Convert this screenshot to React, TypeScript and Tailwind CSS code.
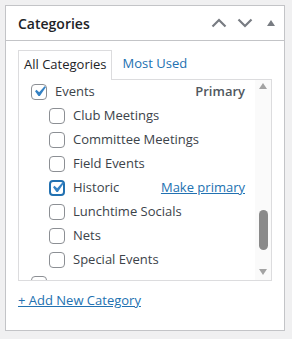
import React from 'react';

const font = { fontFamily: '"Open Sans", "Noto Sans", sans-serif' };

function Check({ checked = false, focus = false }: { checked?: boolean; focus?: boolean }) {
    return (
        <span
            className={
                'flex h-[16px] w-[16px] shrink-0 items-center justify-center rounded-[4px] bg-white ' +
                (focus ? 'border-2 border-[#2271b1]' : 'border border-[#8c8f94]')
            }
        >
            {checked && (
                <svg width="21" height="21" viewBox="0 0 20 20" className="shrink-0">
                    <path d="M14.83 4.89l1.34.94-5.81 8.38H9.02L5.78 9.67l1.34-1.25 2.57 2.4z" fill="#3582c4" />
                </svg>
            )}
        </span>
    );
}

const children = [
    { label: 'Club Meetings' },
    { label: 'Committee Meetings' },
    { label: 'Field Events' },
    { label: 'Historic', checked: true, focus: true, link: true },
    { label: 'Lunchtime Socials' },
    { label: 'Nets' },
    { label: 'Special Events' },
];

export default function App() {
    return (
        <div className="h-[339px] w-[292px] bg-[#f0f0f1] pt-[5px] pl-[5px]" style={font}>
            <div className="h-[326px] w-[280px] border border-[#c3c4c7] bg-white">
                {/* header */}
                <div className="flex h-[35px] items-center border-b border-[#c3c4c7] pl-[12px]">
                    <h2 className="flex-1 text-[14px] font-semibold text-[#1d2327]">Categories</h2>
                    <div className="flex items-center">
                        <span className="flex w-[26px] justify-center">
                            <svg width="16" height="16" viewBox="0 0 16 16" fill="none" stroke="#787c82" strokeWidth="2.2">
                                <path d="M1.5 11.5l6.5-6.5 6.5 6.5" />
                            </svg>
                        </span>
                        <span className="flex w-[26px] justify-center">
                            <svg width="16" height="16" viewBox="0 0 16 16" fill="none" stroke="#787c82" strokeWidth="2.2">
                                <path d="M1.5 4.5l6.5 6.5 6.5-6.5" />
                            </svg>
                        </span>
                        <span className="flex w-[26px] justify-center">
                            <svg width="10" height="8" viewBox="0 0 10 8">
                                <path d="M5 1l4 6H1z" fill="#787c82" />
                            </svg>
                        </span>
                    </div>
                </div>

                <div className="px-[12px] pt-[9px]">
                    {/* tabs */}
                    <div className="flex items-end text-[13px]">
                        <div className="relative -mb-px border border-b-0 border-[#dcdcde] bg-white px-[5px] pt-[4px] pb-[5px] text-[#1d2327]">
                            All Categories
                        </div>
                        <div className="px-[10px] pb-[5px] text-[#2271b1]">Most Used</div>
                    </div>

                    {/* list */}
                    <div className="flex h-[202px] border border-[#dcdcde] bg-white">
                        <div className="flex-1 overflow-hidden pl-[12px] pr-[10px] text-[13px] text-[#3c434a]">
                            <div className="flex h-[24px] items-center gap-[8px]">
                                <Check checked />
                                <span className="flex-1">Events</span>
                                <span className="font-semibold text-[#50575e]">Primary</span>
                            </div>
                            {children.map((c) => (
                                <div key={c.label} className="flex h-[24px] items-center gap-[8px] pl-[18px]">
                                    <Check checked={c.checked} focus={c.focus} />
                                    <span className="flex-1">{c.label}</span>
                                    {c.link && <span className="text-[#2271b1] underline">Make primary</span>}
                                </div>
                            ))}
                            <div className="flex h-[24px] items-center gap-[8px]">
                                <Check />
                            </div>
                        </div>
                        {/* scrollbar */}
                        <div className="flex w-[16px] flex-col items-center bg-[#fafafa] pt-[2px] pb-[4px]">
                            <svg width="10" height="8" viewBox="0 0 10 8">
                                <path d="M5 1l4 6H1z" fill="#a3a3a3" />
                            </svg>
                            <div className="mt-[120px] h-[40px] w-[9px] rounded-full bg-[#8a8a8a]" />
                            <div className="flex-1" />
                            <svg width="10" height="8" viewBox="0 0 10 8">
                                <path d="M5 7l4-6H1z" fill="#a3a3a3" />
                            </svg>
                        </div>
                    </div>

                    <div className="pt-[10px] text-[13px] text-[#2271b1] underline">+ Add New Category</div>
                </div>
            </div>
        </div>
    );
}
